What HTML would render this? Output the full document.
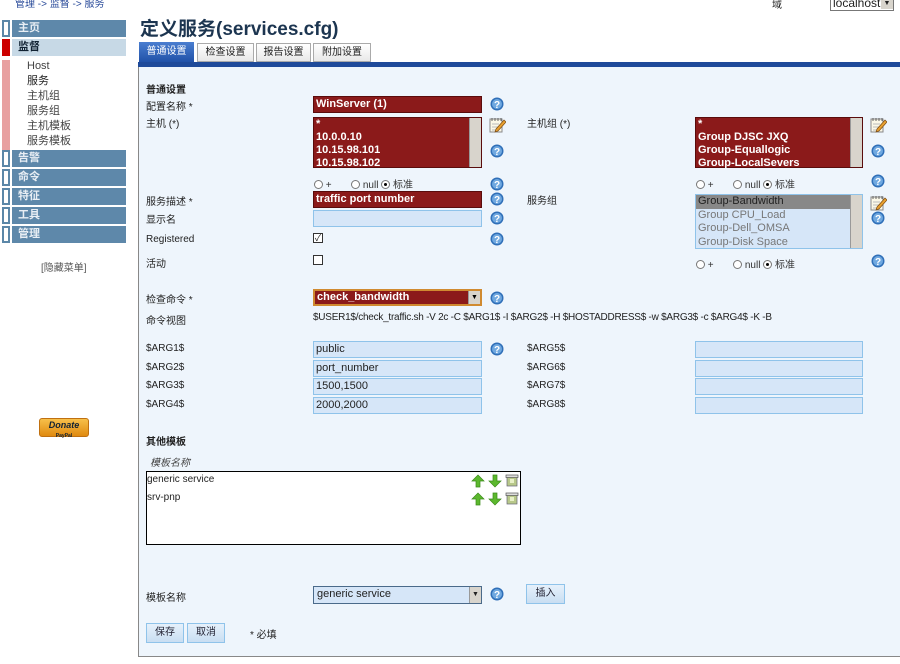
<!DOCTYPE html>
<html><head><meta charset="utf-8">
<style>
*{box-sizing:border-box;margin:0;padding:0}
body{width:900px;height:664px;position:relative;overflow:hidden;background:#fff;font-family:"Liberation Sans","Noto Sans CJK SC",sans-serif;font-size:11px;color:#222}
.a{position:absolute;white-space:nowrap}
.sb{position:absolute;left:2px;width:8px;height:17px;border:2px solid #5b87a8;background:#fff}
.bar{position:absolute;left:12px;width:114px;height:17px;background:#5e88aa;color:#e8eef4;font-weight:bold;padding-left:6px;line-height:17px;font-size:11px}
.sub{position:absolute;left:2px;width:8px;height:15px;background:#e8a0a0}
.subt{position:absolute;left:27px;font-size:11px;color:#444;line-height:15px}
.red{position:absolute;background:#8b1a1a;border:1px solid #5a0c0c;color:#fff;font-weight:bold;font-size:11px;padding-left:2px;line-height:15px}
.blue{position:absolute;background:#d6e6f8;border:1px solid #8fc3ea;font-size:11px;color:#222;padding-left:2px;line-height:15px}
.lbl{position:absolute;font-size:10px;color:#222}
.help{position:absolute;width:14px;height:14px}
.edit{position:absolute;width:17px;height:17px}
.scr{position:absolute;right:0;top:0;bottom:0;width:12px;background:#d8d4cc;border-left:1px solid #999}
.radio{position:absolute;font-size:10px;color:#333}
.rd{display:inline-block;width:9px;height:9px;border:1px solid #777;border-radius:50%;background:#fff;vertical-align:-1px;position:relative}
.rd.on::after{content:"";position:absolute;left:2px;top:2px;width:3px;height:3px;border-radius:50%;background:#000}
.btn{position:absolute;background:linear-gradient(#e6f1fb,#c9def2);border:1px solid #8fc3ea;font-size:10px;text-align:center;line-height:18px;color:#223}
</style></head><body>
<svg width="0" height="0" style="position:absolute"><defs>
<symbol id="h" viewBox="0 0 14 14"><circle cx="7" cy="7" r="6.5" fill="#2f6fb8"/><circle cx="7" cy="7" r="5" fill="#6fa8e0"/><text x="7" y="11" font-size="10" font-weight="bold" fill="#fff" text-anchor="middle" font-family="Liberation Sans">?</text></symbol>
<symbol id="e" viewBox="0 0 17 17"><rect x="1" y="3" width="12" height="13" fill="#fbf8e8" stroke="#888"/><path d="M3 2v3M6 2v3M9 2v3M12 2v3" stroke="#666"/><path d="M3 8h7M3 11h6M3 14h5" stroke="#bbb"/><path d="M7 13l8-9 2 2-8 9-3 1z" fill="#e8a030" stroke="#7a4a10" stroke-width=".7"/></symbol>
<symbol id="up" viewBox="0 0 14 14"><path d="M7 1l6 6H9v6H5V7H1z" fill="#5cb82e" stroke="#3a8a18" stroke-width=".7"/></symbol>
<symbol id="dn" viewBox="0 0 14 14"><path d="M7 13l6-6H9V1H5v6H1z" fill="#5cb82e" stroke="#3a8a18" stroke-width=".7"/></symbol>
<symbol id="del" viewBox="0 0 14 14"><rect x="2" y="4" width="10" height="9" fill="#b8c88a" stroke="#667" stroke-width=".7"/><rect x="1" y="2" width="12" height="2.5" fill="#ddd" stroke="#555" stroke-width=".7"/><rect x="5" y="6" width="4" height="4" fill="#e8f0c8"/></symbol>
</defs></svg>

<div class="a" style="left:15px;top:-5px;color:#2a4b9a;font-size:10px">管理 -&gt; 监督 -&gt; 服务</div>
<div class="a" style="left:772px;top:-4px;font-size:10px">域</div>
<div class="a" style="left:830px;top:-3px;width:64px;height:14px;border:1px solid #777;border-top:none;background:#fff;font-size:12px;line-height:13px;padding-left:2px">localhost<span style="position:absolute;right:0;top:0;width:12px;height:12px;background:#d8d4cc;font-size:7px;text-align:center">▼</span></div>

<!-- sidebar -->
<div class="sb" style="top:20px"></div><div class="bar" style="top:20px">主页</div>
<div class="sb" style="top:39px;border-color:#c00;background:#c00"></div><div class="bar" style="top:39px;background:#c7d9e6;color:#123">监督</div>
<div class="sub" style="top:60px"></div><div class="subt" style="top:59px">Host</div>
<div class="sub" style="top:75px"></div><div class="subt" style="top:74px;color:#222">服务</div>
<div class="sub" style="top:90px"></div><div class="subt" style="top:89px">主机组</div>
<div class="sub" style="top:105px"></div><div class="subt" style="top:104px">服务组</div>
<div class="sub" style="top:120px"></div><div class="subt" style="top:119px">主机模板</div>
<div class="sub" style="top:135px"></div><div class="subt" style="top:134px">服务模板</div>
<div class="sb" style="top:150px"></div><div class="bar" style="top:150px">告警</div>
<div class="sb" style="top:169px"></div><div class="bar" style="top:169px">命令</div>
<div class="sb" style="top:188px"></div><div class="bar" style="top:188px">特征</div>
<div class="sb" style="top:207px"></div><div class="bar" style="top:207px">工具</div>
<div class="sb" style="top:226px"></div><div class="bar" style="top:226px">管理</div>
<div class="a" style="left:41px;top:259px;color:#555;font-size:10px">[隐藏菜单]</div>
<div class="a" style="left:39px;top:418px;width:50px;height:19px;background:linear-gradient(#f7c04a,#e08a10);border:1px solid #c07010;border-radius:3px;text-align:center;line-height:8px;padding-top:1px"><span style="font:italic bold 9px 'Liberation Sans';color:#123">Donate</span><br><span style="font:bold 5px 'Liberation Sans';color:#123">PayPal</span></div>

<!-- title -->
<div class="a" style="left:140px;top:14px;font-size:19px;font-weight:bold;color:#1c3550">定义服务(services.cfg)</div>
<!-- tabs -->
<div class="a" style="left:139px;top:42px;width:55px;height:21px;background:linear-gradient(#4a7ed0,#1e4fa6);color:#fff;font-size:10px;text-align:center;line-height:20px">普通设置</div>
<div class="a" style="left:197px;top:43px;width:57px;height:19px;background:linear-gradient(#fff,#e8e8e8);border:1px solid #aaa;font-size:10px;text-align:center;line-height:18px">检查设置</div>
<div class="a" style="left:256px;top:43px;width:55px;height:19px;background:linear-gradient(#fff,#e8e8e8);border:1px solid #aaa;font-size:10px;text-align:center;line-height:18px">报告设置</div>
<div class="a" style="left:313px;top:43px;width:58px;height:19px;background:linear-gradient(#fff,#e8e8e8);border:1px solid #aaa;font-size:10px;text-align:center;line-height:18px">附加设置</div>
<div class="a" style="left:138px;top:62px;width:762px;height:5px;background:#1e4a9a"></div>
<div class="a" style="left:138px;top:67px;width:762px;height:590px;background:#eef5fc;border-left:1px solid #888;border-bottom:1px solid #888"></div>

<div class="lbl" style="left:146px;top:81px;font-weight:bold">普通设置</div>
<div class="lbl" style="left:146px;top:98px">配置名称 *</div>
<div class="red" style="left:313px;top:96px;width:169px;height:17px">WinServer (1)</div>
<svg class="help" style="left:490px;top:97px"><use href="#h"/></svg>

<div class="lbl" style="left:146px;top:115px">主机 (*)</div>
<div class="red" style="left:313px;top:117px;width:169px;height:51px;line-height:13px;font-size:11px">*<br>10.0.0.10<br>10.15.98.101<br>10.15.98.102<div class="scr"></div></div>
<svg class="edit" style="left:489px;top:116px"><use href="#e"/></svg>
<svg class="help" style="left:490px;top:144px"><use href="#h"/></svg>
<div class="radio" style="left:314px;top:176px"><span class="rd"></span> + &nbsp; &nbsp; &nbsp; <span class="rd"></span> null <span class="rd on"></span> 标准</div>
<svg class="help" style="left:490px;top:177px"><use href="#h"/></svg>

<div class="lbl" style="left:527px;top:115px">主机组 (*)</div>
<div class="red" style="left:695px;top:117px;width:168px;height:51px;line-height:13px">*<br>Group DJSC JXQ<br>Group-Equallogic<br>Group-LocalSevers<div class="scr"></div></div>
<svg class="edit" style="left:870px;top:116px"><use href="#e"/></svg>
<svg class="help" style="left:871px;top:144px"><use href="#h"/></svg>
<div class="radio" style="left:696px;top:176px"><span class="rd"></span> + &nbsp; &nbsp; &nbsp; <span class="rd"></span> null <span class="rd on"></span> 标准</div>
<svg class="help" style="left:871px;top:174px"><use href="#h"/></svg>

<div class="lbl" style="left:146px;top:193px">服务描述 *</div>
<div class="red" style="left:313px;top:191px;width:169px;height:17px">traffic port number</div>
<svg class="help" style="left:490px;top:192px"><use href="#h"/></svg>
<div class="lbl" style="left:146px;top:211px">显示名</div>
<div class="blue" style="left:313px;top:210px;width:169px;height:17px"></div>
<svg class="help" style="left:490px;top:211px"><use href="#h"/></svg>
<div class="lbl" style="left:146px;top:234px">Registered</div>
<div class="a" style="left:313px;top:233px;width:10px;height:10px;border:1px solid #333;background:#fff;font-size:9px;line-height:8px;text-align:center">✓</div>
<svg class="help" style="left:490px;top:232px"><use href="#h"/></svg>
<div class="lbl" style="left:146px;top:255px">活动</div>
<div class="a" style="left:313px;top:255px;width:10px;height:10px;border:1px solid #333;background:#fff"></div>

<div class="lbl" style="left:527px;top:192px">服务组</div>
<div class="blue" style="left:695px;top:194px;width:168px;height:55px;line-height:13.5px;color:#777;padding-left:0"><div style="background:#888;color:#222;padding-left:2px">Group-Bandwidth</div><div style="padding-left:2px">Group CPU_Load<br>Group-Dell_OMSA<br>Group-Disk Space</div><div class="scr"></div></div>
<svg class="edit" style="left:870px;top:194px"><use href="#e"/></svg>
<svg class="help" style="left:871px;top:211px"><use href="#h"/></svg>
<div class="radio" style="left:696px;top:256px"><span class="rd"></span> + &nbsp; &nbsp; &nbsp; <span class="rd"></span> null <span class="rd on"></span> 标准</div>
<svg class="help" style="left:871px;top:254px"><use href="#h"/></svg>

<div class="lbl" style="left:146px;top:291px">检查命令 *</div>
<div class="red" style="left:313px;top:289px;width:169px;height:17px;border:2px solid #d08a30;line-height:13px">check_bandwidth<div class="scr" style="background:#d8d4cc;width:12px;font-size:7px;color:#000;text-align:center">▼</div></div>
<svg class="help" style="left:490px;top:291px"><use href="#h"/></svg>
<div class="lbl" style="left:146px;top:312px">命令视图</div>
<div class="lbl" style="left:313px;top:312px;letter-spacing:-0.25px">$USER1$/check_traffic.sh -V 2c -C $ARG1$ -I $ARG2$ -H $HOSTADDRESS$ -w $ARG3$ -c $ARG4$ -K -B</div>

<div class="lbl" style="left:146px;top:343px">$ARG1$</div><div class="blue" style="left:313px;top:341px;width:169px;height:17px">public</div>
<svg class="help" style="left:490px;top:342px"><use href="#h"/></svg>
<div class="lbl" style="left:146px;top:362px">$ARG2$</div><div class="blue" style="left:313px;top:360px;width:169px;height:17px">port_number</div>
<div class="lbl" style="left:146px;top:380px">$ARG3$</div><div class="blue" style="left:313px;top:378px;width:169px;height:17px">1500,1500</div>
<div class="lbl" style="left:146px;top:399px">$ARG4$</div><div class="blue" style="left:313px;top:397px;width:169px;height:17px">2000,2000</div>
<div class="lbl" style="left:527px;top:343px">$ARG5$</div><div class="blue" style="left:695px;top:341px;width:168px;height:17px"></div>
<div class="lbl" style="left:527px;top:362px">$ARG6$</div><div class="blue" style="left:695px;top:360px;width:168px;height:17px"></div>
<div class="lbl" style="left:527px;top:380px">$ARG7$</div><div class="blue" style="left:695px;top:378px;width:168px;height:17px"></div>
<div class="lbl" style="left:527px;top:399px">$ARG8$</div><div class="blue" style="left:695px;top:397px;width:168px;height:17px"></div>

<div class="lbl" style="left:146px;top:433px;font-weight:bold">其他模板</div>
<div class="lbl" style="left:150px;top:454px;font-style:italic;color:#444">模板名称</div>
<div class="a" style="left:146px;top:471px;width:375px;height:74px;background:#fff;border:1px solid #000"></div>
<div class="lbl" style="left:147px;top:474px">generic service</div>
<div class="lbl" style="left:147px;top:492px">srv-pnp</div>
<svg class="help" style="left:471px;top:474px"><use href="#up"/></svg><svg class="help" style="left:488px;top:474px"><use href="#dn"/></svg><svg class="help" style="left:505px;top:473px"><use href="#del"/></svg>
<svg class="help" style="left:471px;top:492px"><use href="#up"/></svg><svg class="help" style="left:488px;top:492px"><use href="#dn"/></svg><svg class="help" style="left:505px;top:491px"><use href="#del"/></svg>

<div class="lbl" style="left:146px;top:589px">模板名称</div>
<div class="blue" style="left:313px;top:586px;width:169px;height:18px;border:1px solid #4a6a8a;padding-left:3px">generic service<div class="scr" style="font-size:7px;text-align:center;line-height:15px">▼</div></div>
<svg class="help" style="left:490px;top:587px"><use href="#h"/></svg>
<div class="btn" style="left:526px;top:584px;width:39px;height:20px">插入</div>
<div class="btn" style="left:146px;top:623px;width:38px;height:20px">保存</div>
<div class="btn" style="left:187px;top:623px;width:38px;height:20px">取消</div>
<div class="lbl" style="left:250px;top:626px">* 必填</div>
</body></html>
